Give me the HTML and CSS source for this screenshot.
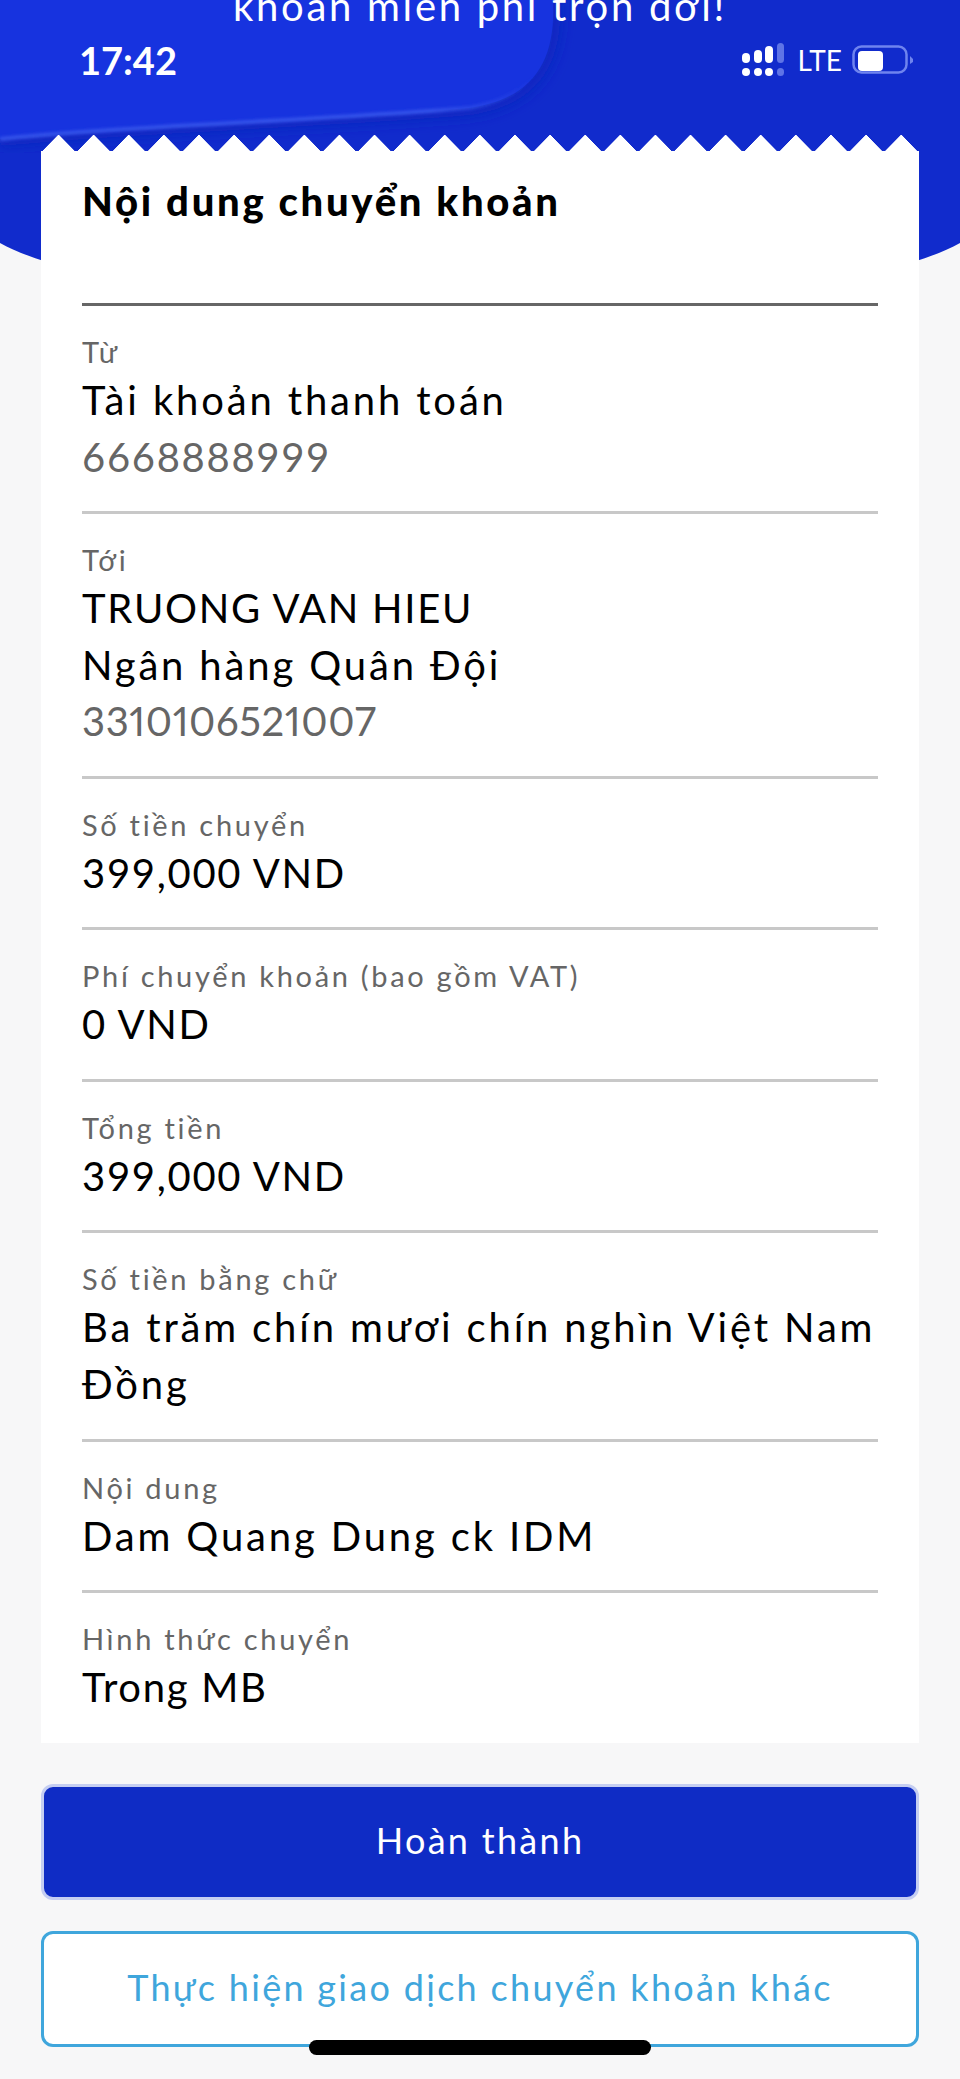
FILE: index.html
```html
<!DOCTYPE html>
<html lang="vi">
<head>
  <meta charset="UTF-8">
  <meta name="viewport" content="width=device-width, initial-scale=1.0">
  <title>Nội dung chuyển khoản</title>
  <link rel="stylesheet" href="styles.css">
</head>
<body>
  <div class="page">
    <!-- blue header behind the receipt -->
    <div class="hero">
      <svg class="hero-bg" width="960" height="270" viewBox="0 0 960 270">
        <defs>
          <linearGradient id="sheen" x1="0" y1="0" x2="1" y2="0">
            <stop offset="0" stop-color="#3553ea"/>
            <stop offset="0.8" stop-color="#3553ea"/>
            <stop offset="1" stop-color="#3553ea" stop-opacity="0"/>
          </linearGradient>
          <filter id="blur3"><feGaussianBlur stdDeviation="1.5"/></filter>
          <filter id="blur8"><feGaussianBlur stdDeviation="7"/></filter>
          <clipPath id="heroClip">
            <path d="M0 0H960V243C800 330 160 330 0 243Z"/>
          </clipPath>
        </defs>
        <g clip-path="url(#heroClip)">
          <rect width="960" height="270" fill="#112bcc"/>
          <path d="M553 0C556 60 535 98 470 108C300 122 120 126 0 139" fill="none" stroke="#0f27bf" stroke-width="14" filter="url(#blur8)"/>
          <path d="M553 0C556 60 535 98 470 108C300 122 120 126 0 139V0Z" fill="#1733df"/>
          <path d="M0 139C120 126 300 122 470 108C500 103 520 92 535 76" fill="none" stroke="url(#sheen)" stroke-width="4" filter="url(#blur3)"/>
        </g>
      </svg>
      <div class="hero-title">khoản miễn phí trọn đời!</div>
    </div>

    <div class="status-bar">
      <span class="time">17:42</span>
      <div class="status-icons">
        <svg width="46" height="34" viewBox="0 0 46 34">
          <rect x="0" y="10" width="8" height="10" rx="4" fill="#fff"/>
          <rect x="12" y="7" width="8" height="13" rx="4" fill="#fff"/>
          <rect x="23" y="3" width="8" height="17" rx="4" fill="#fff"/>
          <rect x="35" y="0" width="7" height="20" rx="3.5" fill="#5f74e6"/>
          <rect x="0" y="25" width="8" height="8" rx="4" fill="#fff"/>
          <rect x="12" y="25" width="8" height="8" rx="4" fill="#fff"/>
          <rect x="23" y="25" width="8" height="8" rx="4" fill="#fff"/>
          <rect x="35" y="25" width="7" height="8" rx="3.5" fill="#5f74e6"/>
        </svg>
        <span class="network">LTE</span>
        <svg width="62" height="30" viewBox="0 0 62 30">
          <rect x="1.5" y="1.5" width="53" height="26" rx="8" fill="none" stroke="#6f84ee" stroke-width="2.5"/>
          <rect x="6" y="6" width="25" height="20" rx="4" fill="#fff"/>
          <path d="M58 11L61 14V17L58 19Z" fill="#6f84ee"/>
        </svg>
      </div>
    </div>

    <main class="receipt">
      <div class="teeth"></div>
      <div class="receipt-body">
        <h1 class="receipt-title">Nội dung chuyển khoản</h1>

        <section class="row">
          <div class="label">Từ</div>
          <div class="value">Tài khoản thanh toán</div>
          <div class="value number muted">6668888999</div>
        </section>
        <section class="row">
          <div class="label">Tới</div>
          <div class="value number">TRUONG VAN HIEU</div>
          <div class="value">Ngân hàng Quân Đội</div>
          <div class="value muted digits-narrow">3310106521007</div>
        </section>
        <section class="row">
          <div class="label">Số tiền chuyển</div>
          <div class="value number">399,000 VND</div>
        </section>
        <section class="row">
          <div class="label">Phí chuyển khoản (bao gồm VAT)</div>
          <div class="value number">0 VND</div>
        </section>
        <section class="row">
          <div class="label">Tổng tiền</div>
          <div class="value number">399,000 VND</div>
        </section>
        <section class="row">
          <div class="label">Số tiền bằng chữ</div>
          <div class="value">Ba trăm chín mươi chín nghìn Việt Nam Đồng</div>
        </section>
        <section class="row">
          <div class="label">Nội dung</div>
          <div class="value">Dam Quang Dung ck IDM</div>
        </section>
        <section class="row last">
          <div class="label">Hình thức chuyển</div>
          <div class="value number">Trong MB</div>
        </section>
      </div>
    </main>

    <div class="actions">
      <button class="btn btn-primary" type="button">Hoàn thành</button>
      <button class="btn btn-outline" type="button">Thực hiện giao dịch chuyển khoản khác</button>
    </div>

    <div class="home-bar"></div>
  </div>
</body>
</html>
```

FILE: styles.css
```css
* {
  box-sizing: border-box;
}

body {
  margin: 0;
  padding: 0;
  font-family: "Lato", "Noto Sans", sans-serif;
  background-color: #f7f7f8;
}

.page {
  position: relative;
  width: 960px;
  height: 2079px;
  overflow: hidden;
  padding-top: 135px;
}

.hero {
  position: absolute;
  top: 0;
  left: 0;
  width: 960px;
  height: 270px;
}

.hero-bg {
  display: block;
}

.hero-title {
  position: absolute;
  top: -18px;
  left: 0;
  width: 100%;
  text-align: center;
  font-size: 40px;
  line-height: 48px;
  letter-spacing: 2.7px;
  color: white;
}

.status-bar {
  position: absolute;
  top: 39px;
  left: 0;
  width: 100%;
  height: 42px;
  padding: 0 46px 0 79px;
  display: flex;
  justify-content: space-between;
  align-items: center;
  color: white;
}

.time {
  font-size: 38px;
  font-weight: 700;
}

.status-icons {
  display: flex;
  align-items: center;
  gap: 10px;
}

.network {
  font-size: 28px;
  font-weight: 400;
}

.receipt {
  position: relative;
  margin: 0 41px;
}

.teeth {
  height: 17px;
  background: conic-gradient(from 134deg at 50% 0, white 92deg, transparent 0) 0 0 / 35.12px 17px repeat-x;
}

.receipt-body {
  height: 1591px;
  padding: 0 41px;
  background-color: white;
}

.receipt-title {
  margin: 0;
  height: 154px;
  padding-top: 24px;
  border-bottom: 3px solid #666666;
  font-size: 40px;
  line-height: 50px;
  font-weight: 900;
  letter-spacing: 2.7px;
  color: black;
}

.row {
  padding: 26px 0 26.1px;
  border-bottom: 3px solid #c8c8c8;
}

.row.last {
  border-bottom: none;
}

.label {
  font-size: 29px;
  line-height: 40px;
  letter-spacing: 2.7px;
  color: #666666;
}

.value {
  font-size: 40px;
  line-height: 56.5px;
  letter-spacing: 2.85px;
  color: black;
}

.value.number {
  letter-spacing: 1.7px;
}

.value.digits-narrow {
  letter-spacing: 0.6px;
  font-variant-numeric: proportional-nums;
}

.value.muted {
  color: #666666;
}

.actions {
  margin: 41px 41px 0;
  display: flex;
  flex-direction: column;
  gap: 31px;
}

.btn {
  display: block;
  width: 100%;
  height: 116px;
  padding: 0 0 5px;
  border-radius: 12px;
  font-family: inherit;
  font-size: 36px;
  letter-spacing: 2.3px;
  cursor: pointer;
}

.btn-primary {
  background-color: #0f2cc5;
  border: 3px solid #c5cef2;
  color: white;
}

.btn-outline {
  background-color: white;
  border: 3px solid #3fa6dc;
  color: #3fa6dc;
}

.home-bar {
  position: absolute;
  left: 309px;
  top: 2040px;
  width: 342px;
  height: 15px;
  border-radius: 8px;
  background-color: black;
}
```
